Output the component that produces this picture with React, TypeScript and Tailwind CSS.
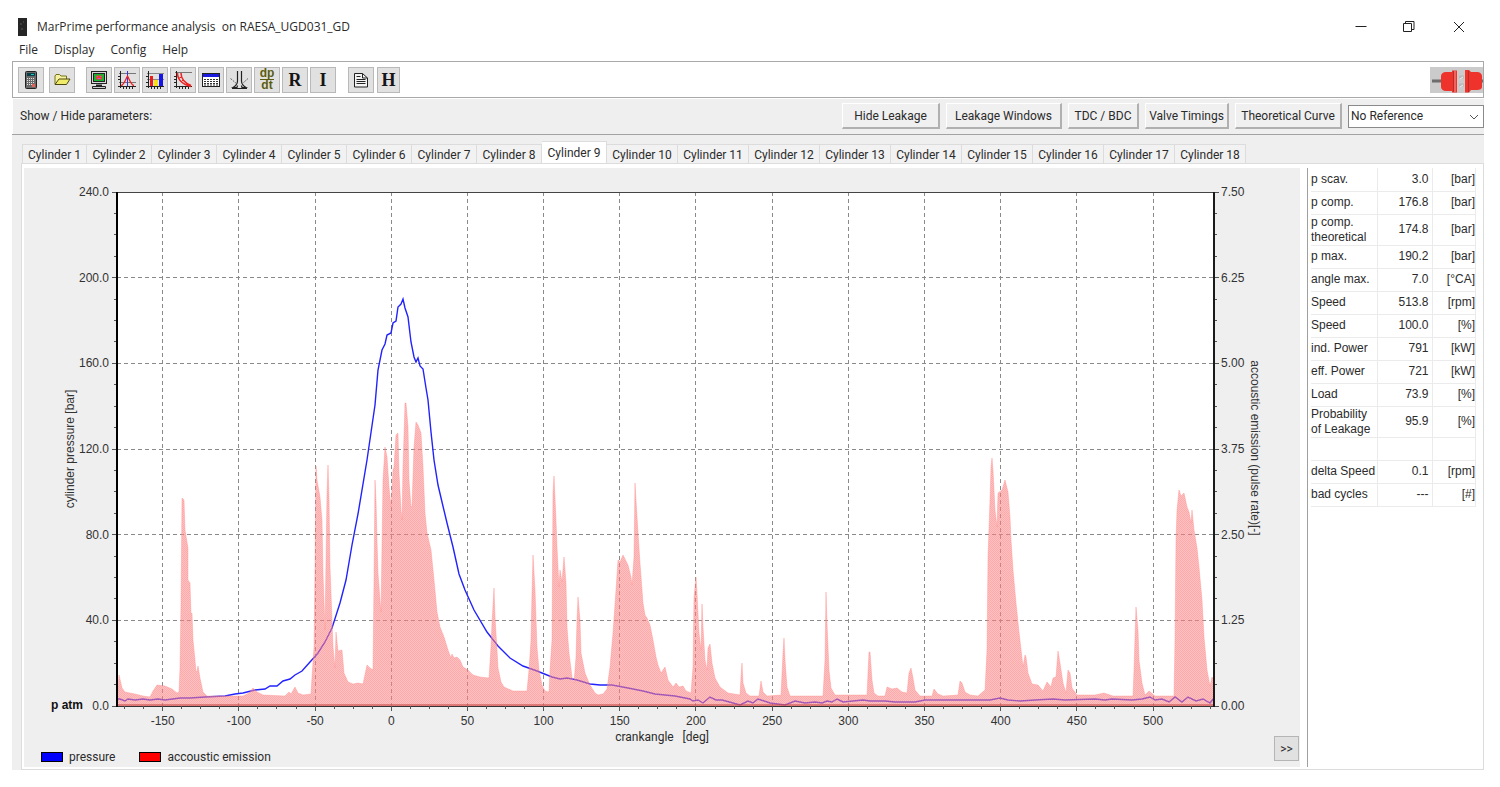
import { useState, type ReactNode } from "react";

type Point = [number, number];

// plot area inside the chart's own coordinate system
const PLOT = { left: 117, right: 1214, top: 192, bottom: 706 };

const degToX = (deg: number) =>
  PLOT.left + ((deg + 180) / 720) * (PLOT.right - PLOT.left);
const barToY = (bar: number) =>
  PLOT.bottom - (bar / 240) * (PLOT.bottom - PLOT.top);

const xLabels = [
  -150, -100, -50, 0, 50, 100, 150, 200, 250, 300, 350, 400, 450, 500,
];
const yLabels = [0, 40, 80, 120, 160, 200, 240];

const pressure: Point[] = [
  [117, 699], [120, 699], [125, 701], [128, 699], [135, 700], [143, 699],
  [150, 700], [158, 699], [165, 700], [180, 698], [190, 698], [205, 697],
  [225, 696], [235, 694], [243, 693], [255, 690], [265, 689], [270, 686],
  [277, 686], [283, 681], [290, 679], [295, 675], [302, 671], [310, 662],
  [318, 653], [325, 642], [332, 628], [340, 603], [346, 580], [352, 545],
  [358, 514], [367, 460], [375, 405], [378, 370], [382, 350], [385, 344],
  [387, 335], [391, 333], [393, 323], [396, 321], [398, 307], [401, 304],
  [403, 299], [405, 308], [408, 317], [411, 342], [414, 357], [416, 362],
  [418, 358], [420, 366], [423, 369], [426, 388], [428, 400], [431, 432],
  [434, 460], [438, 485], [442, 502], [447, 523], [453, 547], [459, 574],
  [465, 590], [474, 610], [487, 632], [498, 646], [510, 658], [523, 666],
  [537, 671], [552, 677], [560, 679], [567, 678], [577, 680], [590, 684],
  [600, 685], [612, 685], [628, 688], [643, 691], [655, 694], [675, 696],
  [690, 699], [693, 701], [698, 700], [703, 703], [710, 697], [716, 700],
  [722, 700], [733, 703], [740, 705], [748, 701], [753, 703], [758, 699],
  [770, 703], [785, 705], [795, 701], [805, 703], [815, 702], [822, 703],
  [827, 701], [832, 702], [837, 699], [843, 702], [863, 700], [870, 701],
  [885, 701], [895, 702], [915, 702], [925, 700], [960, 700], [990, 700],
  [1000, 698], [1008, 700], [1020, 701], [1035, 700], [1053, 699],
  [1065, 700], [1095, 699], [1105, 700], [1112, 699], [1132, 700],
  [1142, 699], [1150, 697], [1155, 700], [1162, 699], [1169, 702],
  [1175, 697], [1182, 702], [1188, 697], [1196, 701], [1203, 699],
  [1210, 703], [1214, 698],
];

const emission: Point[] = [
  [117, 700], [119, 675], [122, 688], [125, 692], [135, 694], [143, 696],
  [150, 697], [153, 691], [157, 685], [165, 686], [172, 689], [177, 693],
  [179, 692], [180, 668], [181, 603], [182, 498], [184, 500], [185, 530],
  [188, 548], [188, 580], [190, 583], [191, 614], [192, 613], [193, 640],
  [195, 660], [196, 672], [197, 671], [198, 666], [200, 678], [203, 692],
  [207, 696], [243, 696], [249, 693], [253, 688], [257, 692], [263, 695],
  [285, 696], [289, 692], [291, 694], [295, 687], [298, 693], [303, 695],
  [311, 694], [312, 677], [314, 647], [315, 567], [316, 466], [317, 480],
  [320, 497], [322, 520], [323, 573], [325, 630], [327, 493], [328, 465],
  [329, 497], [330, 567], [332, 620], [333, 647], [335, 668], [336, 632],
  [338, 651], [342, 650], [344, 673], [348, 682], [353, 684], [358, 683],
  [363, 684], [367, 665], [370, 668], [373, 670], [374, 580], [375, 480],
  [376, 500], [377, 540], [378, 573], [380, 600], [381, 612], [382, 547],
  [383, 480], [385, 447], [387, 457], [389, 487], [391, 507], [393, 470],
  [394, 467], [396, 435], [398, 433], [399, 473], [401, 510], [402, 520],
  [403, 467], [405, 403], [406, 403], [408, 427], [409, 480], [411, 507],
  [412, 506], [414, 447], [416, 422], [418, 425], [421, 433], [423, 467],
  [425, 513], [427, 533], [431, 550], [434, 580], [437, 612], [440, 627],
  [444, 637], [448, 650], [451, 658], [452, 654], [454, 658], [457, 657],
  [460, 660], [463, 667], [468, 670], [473, 675], [480, 677], [489, 678],
  [491, 647], [492, 623], [494, 588], [495, 617], [497, 650], [498, 668],
  [501, 682], [504, 687], [513, 691], [527, 691], [529, 670], [531, 640],
  [532, 593], [533, 555], [535, 590], [537, 647], [539, 670], [542, 685],
  [545, 691], [549, 692], [550, 670], [552, 640], [553, 493], [554, 476],
  [556, 520], [557, 547], [559, 587], [560, 570], [562, 582], [564, 557],
  [566, 583], [567, 627], [569, 653], [572, 677], [574, 683], [576, 657],
  [577, 620], [578, 597], [580, 620], [581, 653], [585, 673], [590, 685],
  [595, 693], [598, 695], [603, 694], [607, 689], [610, 667], [613, 633],
  [616, 590], [618, 560], [620, 562], [623, 555], [628, 565], [631, 577],
  [632, 585], [634, 557], [635, 483], [636, 500], [638, 533], [640, 563],
  [643, 603], [645, 615], [647, 618], [650, 625], [653, 640], [656, 657],
  [658, 665], [661, 673], [665, 667], [668, 680], [673, 687], [676, 683],
  [679, 687], [683, 686], [686, 691], [691, 693], [693, 667], [694, 597],
  [696, 577], [697, 593], [699, 633], [701, 650], [702, 604], [703, 627],
  [705, 660], [707, 670], [708, 648], [710, 644], [712, 663], [715, 678],
  [720, 687], [728, 693], [740, 695], [741, 677], [742, 663], [743, 683],
  [746, 693], [750, 696], [759, 696], [761, 681], [763, 692], [767, 696],
  [781, 695], [783, 653], [784, 638], [785, 660], [787, 687], [790, 696],
  [815, 696], [823, 696], [825, 660], [826, 592], [827, 623], [829, 670],
  [831, 688], [835, 695], [867, 695], [869, 652], [870, 652], [872, 680],
  [874, 693], [878, 696], [885, 696], [887, 687], [892, 689], [897, 688],
  [902, 692], [907, 693], [909, 673], [911, 668], [913, 678], [915, 690],
  [920, 696], [932, 696], [934, 689], [938, 694], [943, 696], [958, 695],
  [960, 681], [962, 683], [965, 692], [970, 695], [978, 696], [985, 690],
  [987, 650], [988, 557], [990, 500], [991, 467], [992, 458], [993, 470],
  [995, 510], [997, 527], [998, 493], [1002, 490], [1005, 480], [1008, 492],
  [1010, 517], [1011, 540], [1013, 570], [1016, 603], [1019, 632],
  [1022, 658], [1023, 667], [1025, 655], [1026, 657], [1028, 673],
  [1032, 684], [1038, 685], [1043, 691], [1047, 682], [1051, 687],
  [1053, 678], [1056, 677], [1058, 651], [1060, 663], [1063, 683],
  [1066, 693], [1068, 670], [1070, 673], [1072, 688], [1077, 695],
  [1095, 695], [1104, 693], [1113, 696], [1133, 696], [1134, 670],
  [1135, 637], [1136, 607], [1138, 630], [1139, 660], [1142, 683],
  [1145, 695], [1149, 691], [1155, 696], [1174, 696], [1175, 640],
  [1176, 540], [1177, 510], [1179, 490], [1181, 496], [1184, 493],
  [1187, 507], [1189, 512], [1191, 523], [1192, 510], [1194, 530],
  [1197, 548], [1199, 567], [1202, 600], [1204, 637], [1207, 670],
  [1210, 686], [1212, 677], [1214, 680],
];

const toPoints = (points: Point[]) => points.map((p) => p.join(",")).join(" ");

const parameterRows = [
  ["p scav.", "3.0", "[bar]"],
  ["p comp.", "176.8", "[bar]"],
  ["p comp. theoretical", "174.8", "[bar]"],
  ["p max.", "190.2", "[bar]"],
  ["angle max.", "7.0", "[°CA]"],
  ["Speed", "513.8", "[rpm]"],
  ["Speed", "100.0", "[%]"],
  ["ind. Power", "791", "[kW]"],
  ["eff. Power", "721", "[kW]"],
  ["Load", "73.9", "[%]"],
  ["Probability of Leakage", "95.9", "[%]"],
  ["", "", ""],
  ["delta Speed", "0.1", "[rpm]"],
  ["bad cycles", "---", "[#]"],
];

const parameterButtons = [
  { label: "Hide Leakage", width: "w-[98px]" },
  { label: "Leakage Windows", width: "w-[116px]" },
  { label: "TDC / BDC", width: "w-[71px]" },
  { label: "Valve Timings", width: "w-[84px]" },
  { label: "Theoretical Curve", width: "w-[107px]" },
];

function Icon({ children }: { children: ReactNode }) {
  return (
    <svg
      className="h-5 w-5"
      viewBox="0 0 20 20"
      fill="none"
      stroke="#222"
      aria-hidden="true"
    >
      {children}
    </svg>
  );
}

function CalculatorIcon() {
  return (
    <Icon>
      <rect x="4.5" y="1.5" width="11" height="17" rx="1" fill="#6b6b6b" />
      <rect x="6" y="3" width="8" height="3" fill="#0b3f45" stroke="none" />
      <path d="M10 4.5h3" stroke="#19c6c6" />
      <path
        d="M6 8.5h8M6 10.5h8M6 12.5h8M6 14.5h8"
        stroke="#e4e4e4"
        strokeDasharray="1 1"
      />
      <rect x="11" y="14" width="3" height="3" fill="#e8605a" stroke="none" />
    </Icon>
  );
}

function FolderIcon() {
  return (
    <Icon>
      <path
        d="M3 14V6l1-1.5h3.5L9 6h5.5v3"
        fill="#f5f3a0"
        stroke="#77701a"
      />
      <path d="M3 14.5 7 9h11l-3.5 5.5z" fill="#f0ec6a" stroke="#4d4810" />
    </Icon>
  );
}

function MonitorIcon() {
  return (
    <Icon>
      <rect x="2.5" y="1.5" width="15" height="12" fill="#d8d8d8" />
      <rect x="4.5" y="3.5" width="11" height="8" fill="#19b432" />
      <rect x="7" y="5.5" width="6" height="4" fill="#f0402c" stroke="none" />
      <path d="M8 6.5h1M11 6.5h1M8.5 8.5h3" stroke="#c24cf0" />
      <path d="M7 15.5h6" strokeWidth="2" />
      <path d="M3.5 16.5h13v2h-13z" fill="#ccc" />
    </Icon>
  );
}

function PeakIcon() {
  return (
    <Icon>
      <path d="M2 3.5h17M2 12.5h17" stroke="#777" />
      <path d="M3.5 1v17M1 16.5h18M1 6.5h2M1 9.5h2" />
      <path d="M6.5 16v3M9.5 16v3M12.5 16v3M15.5 16v3" />
      <path d="M10.5 1v15" stroke="#3434e8" />
      <path
        d="M4 15.5c3-.5 4.5-6 6.5-9.5 2 3.5 3.5 9 6.5 9.5"
        stroke="#e22"
        strokeWidth="1.3"
      />
    </Icon>
  );
}

function BarsIcon() {
  return (
    <Icon>
      <path d="M2 3.5h17M2 9.5h17" stroke="#888" />
      <path d="M3.5 1v17M1 16.5h18M1 6.5h2M1 12.5h2" />
      <path d="M6.5 16v3M9.5 16v3M12.5 16v3M15.5 16v3" />
      <rect x="5" y="6" width="3" height="10" fill="#e91c1c" stroke="none" />
      <rect x="9" y="10" width="4" height="6" fill="#f4e11c" stroke="none" />
      <rect x="14" y="4" width="4" height="12" fill="#1515e6" stroke="none" />
    </Icon>
  );
}

function DecayIcon() {
  return (
    <Icon>
      <path d="M2 2.5h17" stroke="#777" />
      <path d="M3.5 1v17M1 16.5h18M1 6.5h2M1 9.5h2M1 12.5h2" />
      <path d="M6.5 16v3M9.5 16v3M12.5 16v3M15.5 16v3" />
      <path
        d="M4.5 3c0 6 4 11 13.5 13.5M8 3c0 6 4 10 10 12.5"
        stroke="#e22"
        strokeWidth="1.5"
      />
      <path d="M6 8l3-1M8 12l2-2M12 15l2-2" stroke="#e22" />
    </Icon>
  );
}

function CalendarIcon() {
  return (
    <Icon>
      <rect x="1.5" y="3.5" width="17" height="13" fill="#fff" />
      <rect x="2" y="4" width="16" height="3" fill="#1b1be0" stroke="none" />
      <path
        d="M3 9.5h14M3 11.5h14M3 13.5h14M3 15h14"
        strokeDasharray="2 1"
        stroke="#333"
      />
    </Icon>
  );
}

function NozzleIcon() {
  return (
    <Icon>
      <path
        d="M8.5 1v10c0 3-2 5-4.500 6.500h4l.5-2M12.5 1v10c0 3 2 5 4.5 6.500h-4l-.5-2"
        strokeWidth="1.2"
      />
      <path d="M3 18.5h15" />
      <path
        d="M1.5 8.5 8 14M19 8.5 13 14"
        stroke="#666"
        strokeDasharray="2 1"
      />
    </Icon>
  );
}

function DocumentIcon() {
  return (
    <Icon>
      <path d="M3.5 3.5h8l5 4.5v9h-13z" fill="#f4f4f4" />
      <path d="M11.5 3.5V8h5M5.500 6.500h4M5.500 9.500h9M5.500 11.500h9M5.500 13.500h9" />
    </Icon>
  );
}

function ToolButton({
  label,
  narrow,
  children,
}: {
  label: string;
  narrow?: boolean;
  children: ReactNode;
}) {
  return (
    <button
      type="button"
      aria-label={label}
      className={`flex h-[26px] items-center justify-center border border-[#b9b9b9] bg-[#e1e1e1] font-['Liberation_Serif',serif] text-lg leading-none font-bold text-[#151515] ${narrow ? "w-[23px]" : "w-[26px]"}`}
    >
      {children}
    </button>
  );
}

function TitleBar() {
  return (
    <header className="flex h-[30px] items-center pr-[33px] pl-[18px]">
      <svg className="h-[18px] w-[9px]" viewBox="0 0 9 18" aria-hidden="true">
        <rect width="9" height="18" fill="#262626" />
        <path d="M2 6h2M5 4h1M3 11h2" stroke="#5a5a5a" />
      </svg>
      <h1 className="ml-[10px] font-['Open_Sans',sans-serif] text-xs whitespace-pre">
        MarPrime performance analysis  on RAESA_UGD031_GD
      </h1>
      <div className="ml-auto flex items-center gap-9 text-[#222]">
        <button type="button" aria-label="Minimize">
          <svg className="h-3 w-3" viewBox="0 0 12 12" stroke="currentColor">
            <path d="M.5 5.5h11" />
          </svg>
        </button>
        <button type="button" aria-label="Restore">
          <svg
            className="h-3 w-3"
            viewBox="0 0 12 12"
            fill="none"
            stroke="currentColor"
          >
            <path d="M.5 2.5h8v8h-8zM2.5 2.5v-2h8.5v8H9" />
          </svg>
        </button>
        <button type="button" aria-label="Close">
          <svg className="h-4 w-4" viewBox="0 0 16 16" stroke="currentColor">
            <path d="m3 3 10 10M13 3 3 13" />
          </svg>
        </button>
      </div>
    </header>
  );
}

function Toolbar() {
  return (
    <div className="flex h-[37px] items-center border border-[#a9a9a9] bg-white pl-[5px]">
      <div className="flex gap-[5px]">
        <ToolButton label="Calculator">
          <CalculatorIcon />
        </ToolButton>
        <ToolButton label="Open">
          <FolderIcon />
        </ToolButton>
      </div>
      <div className="ml-[11px] flex gap-[2px]">
        <ToolButton label="Monitor">
          <MonitorIcon />
        </ToolButton>
        <ToolButton label="Pressure curve">
          <PeakIcon />
        </ToolButton>
        <ToolButton label="Bar chart">
          <BarsIcon />
        </ToolButton>
        <ToolButton label="Compression">
          <DecayIcon />
        </ToolButton>
        <ToolButton label="Table">
          <CalendarIcon />
        </ToolButton>
        <ToolButton label="Injection">
          <NozzleIcon />
        </ToolButton>
        <ToolButton label="Pressure gradient">
          <span className="flex flex-col font-['Liberation_Sans',sans-serif] text-xs leading-[11px] text-[#5c5c10]">
            <span className="border-b border-[#5c5c10]">dp</span>
            <span className="text-center">dt</span>
          </span>
        </ToolButton>
        <ToolButton label="Report">R</ToolButton>
        <ToolButton label="Info">I</ToolButton>
      </div>
      <div className="ml-3 flex gap-[3px]">
        <ToolButton label="Document">
          <DocumentIcon />
        </ToolButton>
        <ToolButton label="History" narrow>
          H
        </ToolButton>
      </div>
      <svg
        className="ml-auto h-[26px] w-[53px]"
        viewBox="0 0 53 26"
        aria-label="Disconnected"
      >
        <rect width="53" height="26" fill="#cbcbcb" />
        <path d="M2 14h11M50 14h3" stroke="#6d6d6d" strokeWidth="3" />
        <path d="M11 9c0-2 2-4 5-4h6V3.500h5v22h-5V24h-6c-3 0-5-2-5-4z" fill="#ee332c" />
        <path d="M35 3h4l2 2h6c3 0 5 2 5 4v11c0 2-2 3-5 3h-6l-2 2.500h-4z" fill="#ee332c" />
        <path d="M23.500 4v21M38.500 4v21" stroke="#b92a2a" />
        <path d="M25 4v21" stroke="#f6938e" />
        <path d="M29 10h5M29 18h5" stroke="#bbb" strokeWidth="3" />
        <path d="M30 12l3-2M30 20l3-2" stroke="#eee" />
      </svg>
    </div>
  );
}

function ParameterBar() {
  return (
    <div className="flex h-[37px] items-center border-b border-[#a3a3a3] bg-[#efefef] pl-2 shadow-[inset_1px_1px_0_#fff]">
      <span>Show / Hide parameters:</span>
      <div className="ml-auto flex items-center gap-[6px]">
        {parameterButtons.map(({ label, width }) => (
          <button
            key={label}
            type="button"
            className={`h-[26px] border-t border-r-2 border-b-2 border-l border-t-white border-r-[#b0b0b0] border-b-[#b0b0b0] border-l-white bg-[#f0f0f0] pt-[1px] whitespace-nowrap ${width}`}
          >
            {label}
          </button>
        ))}
        <div className="relative">
          <select
            aria-label="Reference"
            className="block h-[23px] w-[136px] appearance-none border border-[#8a8a8a] bg-white pl-[2px]"
          >
            <option>No Reference</option>
          </select>
          <svg
            className="pointer-events-none absolute top-2 right-1 h-2 w-3"
            viewBox="0 0 12 8"
            fill="none"
            stroke="#555"
            aria-hidden="true"
          >
            <path d="m2 2 4 4 4-4" />
          </svg>
        </div>
      </div>
    </div>
  );
}

function CylinderTabs({
  active,
  onSelect,
}: {
  active: number;
  onSelect: (cylinder: number) => void;
}) {
  return (
    <div role="tablist" className="flex h-[22px] items-end pl-[1px]">
      {Array.from({ length: 18 }, (_, i) => i + 1).map((n) => (
        <button
          key={n}
          type="button"
          role="tab"
          aria-selected={n === active}
          onClick={() => onSelect(n)}
          className={`border-t border-r border-[#dcdcdc] text-center whitespace-nowrap first:border-l ${n < 10 ? "w-[65px]" : "w-[71px]"} ${n === active ? "h-[22px] bg-white" : "h-[19px] bg-[#f2f2f2] pt-[1px]"}`}
        >
          {`Cylinder ${n}`}
        </button>
      ))}
    </div>
  );
}

function PressureChart() {
  const minorX = Array.from({ length: 58 }, (_, i) => -175 + i * 12.5);
  const minorY = Array.from({ length: 25 }, (_, i) => i * 10);

  return (
    <svg
      className="block h-auto w-full font-['Liberation_Sans',sans-serif] text-xs"
      viewBox="24 168 1276 562"
      fill="#333"
      role="img"
      aria-label="Cylinder pressure and acoustic emission over crank angle"
    >
      <defs>
        <pattern id="dither" width="2" height="2" patternUnits="userSpaceOnUse">
          <rect width="2" height="2" fill="#ff8585" fillOpacity="0.5" />
          <rect width="1" height="1" fill="#ff7070" fillOpacity="0.3" />
          <rect x="1" y="1" width="1" height="1" fill="#ff7070" fillOpacity="0.3" />
        </pattern>
      </defs>

      <rect
        x={PLOT.left}
        y={PLOT.top}
        width={PLOT.right - PLOT.left}
        height={PLOT.bottom - PLOT.top}
        fill="#fff"
      />

      <g stroke="#8a8a8a" strokeDasharray="4 3" shapeRendering="crispEdges">
        {xLabels.map((deg) => (
          <line key={deg} x1={degToX(deg)} x2={degToX(deg)} y1={PLOT.top} y2={PLOT.bottom} />
        ))}
        {yLabels.slice(1, -1).map((bar) => (
          <line key={bar} x1={PLOT.left} x2={PLOT.right} y1={barToY(bar)} y2={barToY(bar)} />
        ))}
      </g>

      <polyline points={toPoints(pressure)} fill="none" stroke="#2222ff" strokeWidth="1.4" />
      <polygon
        points={`${PLOT.left},${PLOT.bottom} ${toPoints(emission)} ${PLOT.right},${PLOT.bottom}`}
        fill="url(#dither)"
        stroke="#ff8585"
        strokeOpacity="0.35"
      />
      <line x1={PLOT.left} x2={PLOT.right} y1="705" y2="705" stroke="#c04040" />

      <g stroke="#555" shapeRendering="crispEdges">
        <line x1={PLOT.left} x2={PLOT.right} y1={PLOT.top} y2={PLOT.top} stroke="#444" />
        <line x1={PLOT.left} x2={PLOT.right} y1={PLOT.bottom} y2={PLOT.bottom} stroke="#333" />
        {minorX.map((deg) => (
          <line key={deg} x1={degToX(deg)} x2={degToX(deg)} y1="706" y2="709" />
        ))}
        {xLabels.map((deg) => (
          <line key={deg} x1={degToX(deg)} x2={degToX(deg)} y1="706" y2="711" />
        ))}
        {minorY.map((bar) => (
          <g key={bar}>
            <line x1="114" x2="117" y1={barToY(bar)} y2={barToY(bar)} />
            <line x1="1214" x2="1217" y1={barToY(bar)} y2={barToY(bar)} />
          </g>
        ))}
        {yLabels.map((bar) => (
          <g key={bar}>
            <line x1="112" x2="117" y1={barToY(bar)} y2={barToY(bar)} />
            <line x1="1214" x2="1219" y1={barToY(bar)} y2={barToY(bar)} />
          </g>
        ))}
        <line x1="117" x2="117" y1="192" y2="707" stroke="#000" strokeWidth="2" />
        <line x1="1214" x2="1214" y1="192" y2="707" stroke="#1a1a1a" strokeWidth="2" />
      </g>

      {yLabels.map((bar) => (
        <g key={bar}>
          <text x="109" y={barToY(bar) + 4} textAnchor="end">
            {bar.toFixed(1)}
          </text>
          <text x="1221" y={barToY(bar) + 4}>
            {(bar / 32).toFixed(2)}
          </text>
        </g>
      ))}
      {xLabels.map((deg) => (
        <text key={deg} x={degToX(deg)} y="725" textAnchor="middle">
          {deg}
        </text>
      ))}
      <text x="51" y="709" className="font-bold" fill="#111">
        p atm
      </text>
      <text transform="translate(74 449) rotate(-90)" textAnchor="middle">
        cylinder pressure [bar]
      </text>
      <text transform="translate(1251 448) rotate(90)" textAnchor="middle">
        accoustic emission (pulse rate)[-]
      </text>
    </svg>
  );
}

function ChartFooter() {
  return (
    <div className="grid h-[37px] grid-cols-3">
      <div className="flex items-end gap-6 pb-[2px] pl-[17px]">
        <span className="flex items-center gap-[6px]">
          <i className="h-[10px] w-[22px] border border-black bg-[#0000ff]" />
          pressure
        </span>
        <span className="flex items-center gap-[6px]">
          <i className="h-[10px] w-[22px] border border-black bg-[#ff0000]" />
          accoustic emission
        </span>
      </div>
      <span className="text-center leading-[14px] whitespace-pre">
        crankangle   [deg]
      </span>
      <button
        type="button"
        aria-label="Next page"
        className="mt-[6px] mr-[1px] h-[25px] w-[25px] justify-self-end border border-[#b5b5b5] bg-[#e1e1e1]"
      >
        &gt;&gt;
      </button>
    </div>
  );
}

function ParameterTable() {
  return (
    <aside className="ml-[7px] w-[176px] shrink-0 border-l border-[#a0a0a0] pr-[7px] pl-[3px]">
      <table className="w-full table-fixed border-collapse font-['Liberation_Sans',sans-serif] leading-[15px]">
        <colgroup>
          <col className="w-[66px]" />
          <col className="w-[55px]" />
          <col />
        </colgroup>
        <tbody>
          {parameterRows.map(([name, value, unit], i) => (
            <tr key={i} className="h-[23px] border-b border-[#ebebeb]">
              <th scope="row" className="border-r border-[#ebebeb] p-0 text-left font-normal">
                {name}
              </th>
              <td className="border-r border-[#ebebeb] p-0 pr-[3px] text-right">
                {value}
              </td>
              <td className="border-r border-[#ebebeb] p-0 text-right">{unit}</td>
            </tr>
          ))}
        </tbody>
      </table>
    </aside>
  );
}

function App() {
  const [cylinder, setCylinder] = useState(9);

  return (
    <div className="min-h-screen bg-white pt-3 font-['Roboto',sans-serif] text-xs text-[#2b2b2b]">
      <TitleBar />
      <nav className="flex h-[19px] items-start gap-4 pl-[19px] font-['Open_Sans',sans-serif] text-xs">
        {["File", "Display", "Config", "Help"].map((item) => (
          <button key={item} type="button">
            {item}
          </button>
        ))}
      </nav>
      <div className="mr-4 ml-3">
        <Toolbar />
        <ParameterBar />
        <main className="bg-[#efefef] pt-[6px] pl-[9px]">
          <CylinderTabs active={cylinder} onSelect={setCylinder} />
          <div className="flex border border-[#dcdcdc] bg-white pt-1 pb-[2px] pl-[2px]">
            <section className="min-w-0 flex-1 bg-[#efefef]">
              <PressureChart />
              <ChartFooter />
            </section>
            <ParameterTable />
          </div>
        </main>
      </div>
    </div>
  );
}

export default App;
